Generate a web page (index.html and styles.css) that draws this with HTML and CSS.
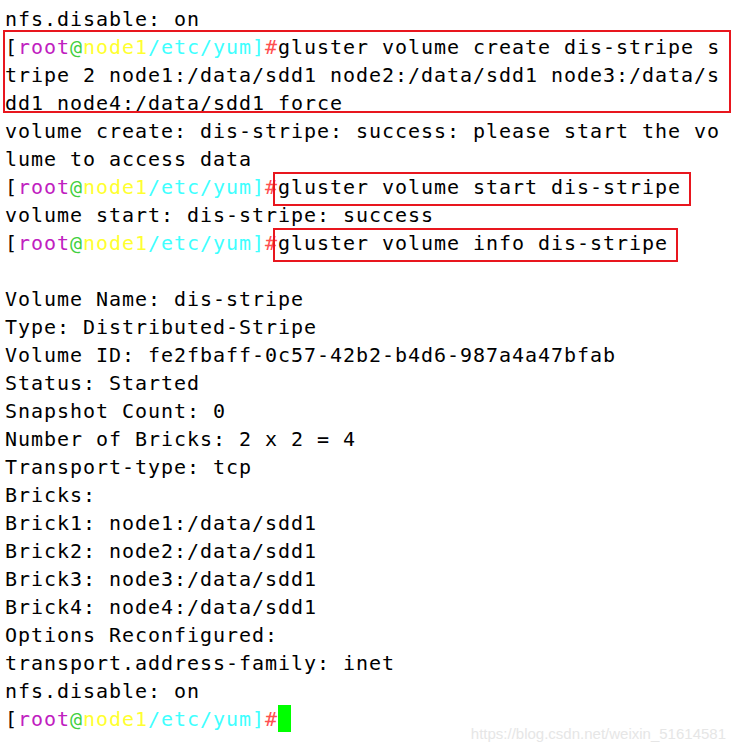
FILE: index.html
```html
<!DOCTYPE html>
<html>
<head>
<meta charset="utf-8">
<link rel="stylesheet" href="styles.css">
</head>
<body>
<div class="term">
  <div class="ln">nfs.disable: on</div>
  <div class="mark-block">
    <div class="ln"><span class="p-br">[</span><span class="p-user">root</span><span class="p-at">@</span><span class="p-host">node1</span><span class="p-path">/etc/yum]</span><span class="p-hash">#</span>gluster volume create dis-stripe s</div>
    <div class="ln">tripe 2 node1:/data/sdd1 node2:/data/sdd1 node3:/data/s</div>
    <div class="ln">dd1 node4:/data/sdd1 force</div>
  </div>
  <div class="ln">volume create: dis-stripe: success: please start the vo</div>
  <div class="ln">lume to access data</div>
  <div class="ln"><span class="p-br">[</span><span class="p-user">root</span><span class="p-at">@</span><span class="p-host">node1</span><span class="p-path">/etc/yum]</span><span class="p-hash">#</span><span class="mark-cmd">gluster volume start dis-stripe</span></div>
  <div class="ln">volume start: dis-stripe: success</div>
  <div class="ln"><span class="p-br">[</span><span class="p-user">root</span><span class="p-at">@</span><span class="p-host">node1</span><span class="p-path">/etc/yum]</span><span class="p-hash">#</span><span class="mark-cmd">gluster volume info dis-stripe</span></div>
  <div class="ln"> </div>
  <div class="ln">Volume Name: dis-stripe</div>
  <div class="ln">Type: Distributed-Stripe</div>
  <div class="ln">Volume ID: fe2fbaff-0c57-42b2-b4d6-987a4a47bfab</div>
  <div class="ln">Status: Started</div>
  <div class="ln">Snapshot Count: 0</div>
  <div class="ln">Number of Bricks: 2 x 2 = 4</div>
  <div class="ln">Transport-type: tcp</div>
  <div class="ln">Bricks:</div>
  <div class="ln">Brick1: node1:/data/sdd1</div>
  <div class="ln">Brick2: node2:/data/sdd1</div>
  <div class="ln">Brick3: node3:/data/sdd1</div>
  <div class="ln">Brick4: node4:/data/sdd1</div>
  <div class="ln">Options Reconfigured:</div>
  <div class="ln">transport.address-family: inet</div>
  <div class="ln">nfs.disable: on</div>
  <div class="ln"><span class="p-br">[</span><span class="p-user">root</span><span class="p-at">@</span><span class="p-host">node1</span><span class="p-path">/etc/yum]</span><span class="p-hash">#</span><span class="cursor"></span></div>
</div>
<div class="watermark">https://blog.csdn.net/weixin_51614581</div>
</body>
</html>
```

FILE: styles.css
```css
html, body {
  margin: 0;
  padding: 0;
  background: #ffffff;
}
body {
  width: 734px;
  height: 751px;
  position: relative;
  overflow: hidden;
}
.term {
  padding: 5px 0 0 5px;
  font-family: "DejaVu Sans Mono", "Liberation Mono", monospace;
  font-size: 20px;
  letter-spacing: 0.96px;
  color: #000000;
}
.ln {
  height: 28px;
  line-height: 28px;
  white-space: pre;
}
.p-br { color: #000000; }
.p-user { color: #c020c0; }
.p-at { color: #40d040; }
.p-host { color: #ffff30; }
.p-path { color: #40ffff; }
.p-hash { color: #ff5050; }
.mark-block {
  position: relative;
}
.mark-block::after {
  content: "";
  position: absolute;
  top: -3px;
  bottom: 4px;
  left: -2px;
  right: 3px;
  border: 2px solid #e8161e;
  box-sizing: border-box;
}
.mark-cmd {
  position: relative;
  display: inline-block;
  height: 28px;
}
.mark-cmd::after {
  content: "";
  position: absolute;
  top: -1px;
  bottom: -5px;
  left: -5px;
  right: -10px;
  border: 2px solid #e8161e;
  box-sizing: border-box;
}
.cursor {
  display: inline-block;
  width: 13px;
  height: 27px;
  background: #00ff00;
  vertical-align: top;
  margin-top: 0;
}
.watermark {
  position: absolute;
  right: 8px;
  bottom: 9px;
  font-family: "Liberation Sans", Arial, sans-serif;
  font-size: 15px;
  color: #e6e6e6;
}
```
